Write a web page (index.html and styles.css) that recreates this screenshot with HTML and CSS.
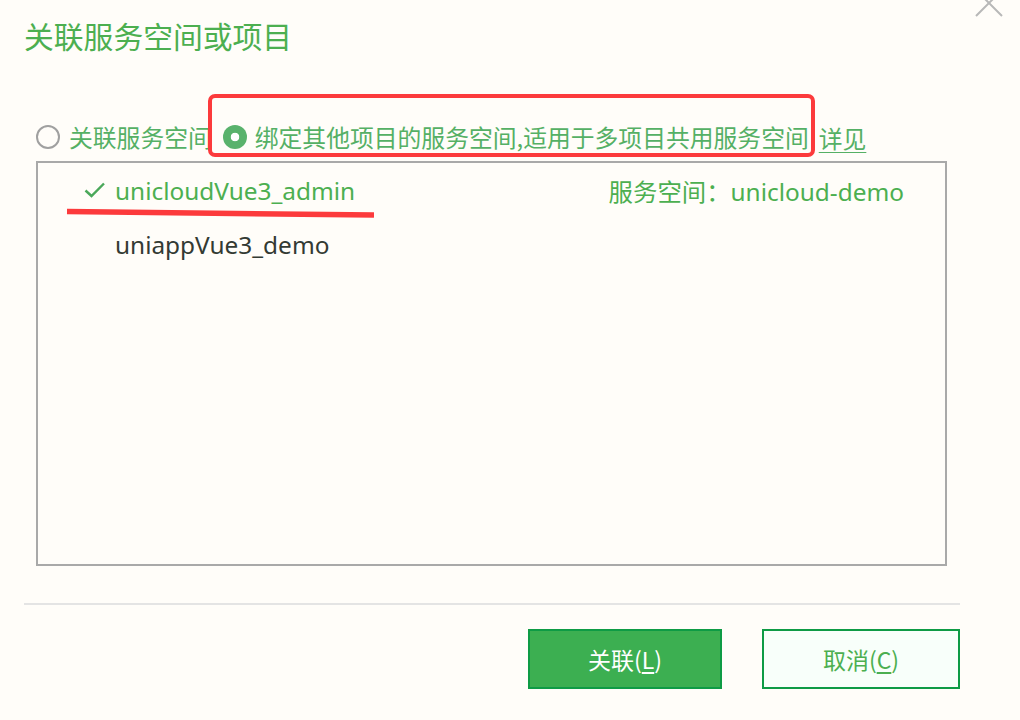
FILE: index.html
```html
<!DOCTYPE html>
<html lang="zh-CN">
<head>
<meta charset="utf-8">
<title>关联服务空间或项目</title>
<link rel="stylesheet" href="styles.css">
</head>
<body>
<div class="dialog">
  <header class="dialog-header">
    <h1 class="title">关联服务空间或项目</h1>
    <button class="close" aria-label="关闭">
      <svg width="34" height="34" viewBox="0 0 34 34"><path d="M4 4 L30 30 M30 4 L4 30" stroke="#b8b8b8" stroke-width="2" fill="none"/></svg>
    </button>
  </header>

  <div class="options">
    <label class="option">
      <span class="radio"></span>
      <span class="option-text">关联服务空间</span>
    </label>
    <label class="option option-checked">
      <span class="radio radio-on"></span>
      <span class="option-text">绑定其他项目的服务空间,适用于多项目共用服务空间</span>
    </label>
    <a class="link">详见</a>
    <span class="mark-box"></span>
  </div>

  <div class="list">
    <div class="row row-selected">
      <span class="check">
        <svg width="22" height="16" viewBox="0 0 22 16"><path d="M1.5 8.5 L7.5 14 L20 1.5" stroke="#4aa85a" stroke-width="2.4" fill="none"/></svg>
      </span>
      <span class="name">unicloudVue3_admin</span>
      <span class="space">服务空间：unicloud-demo</span>
      <svg class="mark-line" width="310" height="12" viewBox="0 0 310 12"><path d="M1 3.5 L308 7" stroke="#fc3a3c" stroke-width="5.5" stroke-linecap="butt" fill="none"/></svg>
    </div>
    <div class="row">
      <span class="check"></span>
      <span class="name">uniappVue3_demo</span>
    </div>
  </div>

  <div class="divider"></div>

  <div class="actions">
    <button class="btn btn-primary">关联(<u>L</u>)</button>
    <button class="btn btn-default">取消(<u>C</u>)</button>
  </div>
</div>
</body>
</html>
```

FILE: styles.css
```css
html, body {
  margin: 0;
  padding: 0;
  background: #fffdf9;
}

body {
  width: 1020px;
  height: 720px;
  overflow: hidden;
  font-family: "Noto Sans", "Noto Sans CJK SC", sans-serif;
  color: #333;
}

.dialog {
  position: relative;
  display: flex;
  flex-direction: column;
  height: 720px;
}

.dialog-header {
  height: 70px;
  padding-left: 24px;
  display: flex;
  align-items: flex-start;
}

.title {
  margin: 16px 0 0;
  font-family: "Noto Sans CJK SC", sans-serif;
  font-weight: 400;
  font-size: 29.8px;
  line-height: 38px;
  color: #4caf50;
}

.close {
  position: absolute;
  top: -14px;
  left: 972px;
  width: 34px;
  height: 34px;
  padding: 0;
  border: 0;
  background: none;
}

.close svg {
  display: block;
}

.options {
  position: relative;
  margin-top: 52px;
  height: 30px;
  padding-left: 36px;
  display: flex;
  align-items: center;
  font-family: "Noto Sans CJK SC", sans-serif;
  font-size: 23.8px;
  color: #55b065;
}

.option {
  display: flex;
  align-items: center;
}

.option + .option {
  margin-left: 11px;
}

.radio {
  width: 20px;
  height: 20px;
  border: 2px solid #a0a0a0;
  border-radius: 50%;
  box-sizing: content-box;
  margin-right: 9px;
}

.radio-on {
  width: 24px;
  height: 24px;
  border: 0;
  background: radial-gradient(circle, #fff 0 4px, #59b26c 4.6px);
  margin-right: 8px;
}

.option-text {
  line-height: 30px;
  white-space: nowrap;
}

.link {
  margin-left: 10px;
  text-decoration: underline;
  text-underline-offset: 4px;
  text-decoration-thickness: 1px;
  color: #55b065;
}

.mark-box {
  position: absolute;
  left: 208px;
  top: -28px;
  width: 599px;
  height: 55px;
  border: 4px solid #fc3a3c;
  border-radius: 7px;
}

.list {
  margin: 9px 0 0 36px;
  width: 907px;
  height: 401px;
  border: 2px solid #a9a9a9;
}

.row {
  position: relative;
  height: 54px;
  display: flex;
  align-items: center;
  padding: 0 41px 0 46px;
  font-size: 24.4px;
}

.check {
  width: 22px;
  height: 16px;
  margin-right: 9px;
  display: block;
}

.check svg {
  display: block;
}

.name {
  color: #333a33;
}

.row-selected .name {
  color: #4caf50;
}

.space {
  margin-left: auto;
  font-family: "Noto Sans", "Noto Sans CJK SC", sans-serif;
  color: #4caf50;
}

.mark-line {
  position: absolute;
  left: 28px;
  top: 45px;
}

.divider {
  margin: 37px 0 0 24px;
  width: 936px;
  height: 2px;
  background: #e4e4e4;
}

.actions {
  margin-top: 24px;
  padding-right: 60px;
  display: flex;
  justify-content: flex-end;
  gap: 40px;
}

.btn {
  height: 60px;
  font-family: "Noto Sans CJK SC", sans-serif;
  font-size: 23px;
  border: 2px solid #0e9b45;
  padding: 0;
  cursor: pointer;
}

.btn u {
  text-underline-offset: 3px;
}

.btn-primary {
  width: 194px;
  background: #3caf51;
  color: #fff;
}

.btn-default {
  width: 198px;
  background: #f8fffa;
  color: #4caf50;
}
```
